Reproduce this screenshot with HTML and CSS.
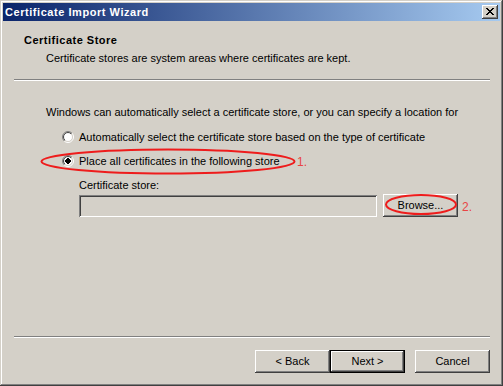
FILE: index.html
```html
<!DOCTYPE html>
<html>
<head>
<meta charset="utf-8">
<title>Certificate Import Wizard</title>
<link rel="stylesheet" href="styles.css">
</head>
<body>
<div class="window">
  <div class="titlebar">
    <span class="title">Certificate Import Wizard</span>
    <button class="close" aria-label="Close">
      <svg width="8" height="7" viewBox="0 0 8 7" shape-rendering="crispEdges">
        <path d="M0 0h2v1h-2zM6 0h2v1h-2zM1 1h2v1h-2zM5 1h2v1h-2zM2 2h4v1h-4zM3 3h2v1h-2zM2 4h4v1h-4zM1 5h2v1h-2zM5 5h2v1h-2zM0 6h2v1h-2zM6 6h2v1h-2z" fill="#000"/>
      </svg>
    </button>
  </div>
  <div class="header">
    <div class="h-title">Certificate Store</div>
    <div class="h-sub">Certificate stores are system areas where certificates are kept.</div>
  </div>
  <div class="sep"></div>
  <div class="content">
    <p class="intro">Windows can automatically select a certificate store, or you can specify a location for</p>
    <div class="radio-row">
      <svg class="radio" width="12" height="12" viewBox="0 0 12 12">
        <defs>
          <linearGradient id="ro" x1="0" y1="0" x2="1" y2="1">
            <stop offset="0.5" stop-color="#808080"/><stop offset="0.5" stop-color="#ffffff"/>
          </linearGradient>
          <linearGradient id="ri" x1="0" y1="0" x2="1" y2="1">
            <stop offset="0.5" stop-color="#404040"/><stop offset="0.5" stop-color="#d4d0c8"/>
          </linearGradient>
        </defs>
        <circle cx="6" cy="6" r="5.5" fill="none" stroke="url(#ro)"/>
        <circle cx="6" cy="6" r="4.5" fill="#fff" stroke="url(#ri)"/>
      </svg>
      <span>Automatically select the certificate store based on the type of certificate</span>
    </div>
    <div class="radio-row second">
      <svg class="radio" width="12" height="12" viewBox="0 0 12 12">
        <circle cx="6" cy="6" r="5.5" fill="none" stroke="url(#ro)"/>
        <circle cx="6" cy="6" r="4.5" fill="#fff" stroke="url(#ri)"/>
        <rect x="4" y="4" width="4" height="4" fill="#000"/>
        <rect x="5" y="3" width="2" height="6" fill="#000"/>
        <rect x="3" y="5" width="6" height="2" fill="#000"/>
      </svg>
      <span>Place all certificates in the following store</span>
    </div>
    <div class="store-label">Certificate store:</div>
    <div class="store-row">
      <div class="field"></div>
      <button class="btn">Browse...</button>
    </div>
  </div>
  <div class="sep"></div>
  <div class="footer">
    <button class="btn">&lt; Back</button>
    <button class="btn default">Next &gt;</button>
    <button class="btn cancel">Cancel</button>
  </div>
  <svg class="annot" width="503" height="386" viewBox="0 0 503 386">
    <ellipse cx="168" cy="161.5" rx="126.5" ry="12" fill="none" stroke="#ee1c1c" stroke-width="2"/>
    <ellipse cx="421" cy="204.5" rx="35" ry="9.5" fill="none" stroke="#ee1c1c" stroke-width="2"/>
    <text x="297" y="166" class="annot-text">1.</text>
    <text x="462" y="211" class="annot-text">2.</text>
  </svg>
</div>
</body>
</html>
```

FILE: styles.css
```css
html, body {
  margin: 0;
  padding: 0;
  background: #d4d0c8;
}

body {
  font-family: "Liberation Sans", Arial, sans-serif;
  font-size: 11px;
  line-height: 13px;
  color: #000;
}

.window {
  position: relative;
  width: 503px;
  height: 386px;
  box-sizing: border-box;
  padding: 3px;
  background: #d4d0c8;
  box-shadow: inset -1px -1px #404040, inset 1px 1px #d4d0c8,
              inset -2px -2px #808080, inset 2px 2px #ffffff;
  display: flex;
  flex-direction: column;
}

.titlebar {
  height: 18px;
  flex: none;
  display: flex;
  align-items: center;
  justify-content: space-between;
  padding: 0 2px 0 2px;
  background: linear-gradient(to right, #0a246a, #a6caf0);
}

.title {
  color: #fff;
  font-weight: bold;
  font-size: 11px;
  line-height: 13px;
  letter-spacing: 0.55px;
}

.close {
  width: 16px;
  height: 14px;
  padding: 0;
  border: 0;
  margin: 0;
  background: #d4d0c8;
  box-shadow: inset -1px -1px #404040, inset 1px 1px #ffffff,
              inset -2px -2px #808080, inset 2px 2px #d4d0c8;
  display: flex;
  align-items: center;
  justify-content: center;
}

.close svg {
  display: block;
  margin: 0 1px 1px 0;
}

.header {
  flex: none;
  padding: 13px 0 0 21px;
}

.h-title {
  font-weight: bold;
  letter-spacing: 0.5px;
}

.h-sub {
  margin-top: 5px;
  padding-left: 22px;
}

.sep {
  flex: none;
  height: 0;
  margin: 14px 10px 0 11px;
  border-top: 1px solid #808080;
  border-bottom: 1px solid #ffffff;
}

.content {
  flex: 1;
  padding: 25px 0 0 43px;
}

.intro {
  margin: 0;
}

.radio-row {
  display: flex;
  align-items: flex-start;
  gap: 5px;
  margin: 12px 0 0 16px;
}

.radio-row.second {
  margin-top: 11px;
}

.radio {
  display: block;
  flex: none;
}

.store-label {
  margin: 11px 0 0 33px;
}

.store-row {
  display: flex;
  align-items: flex-start;
  gap: 6px;
  margin: 2px 0 0 33px;
}

.field {
  width: 298px;
  height: 22px;
  margin-top: 1px;
  background: #d4d0c8;
  box-shadow: inset 1px 1px #808080, inset -1px -1px #ffffff,
              inset 2px 2px #404040, inset -2px -2px #d4d0c8;
}

.btn {
  width: 75px;
  height: 23px;
  padding: 0;
  margin: 0;
  border: 0;
  background: #d4d0c8;
  font-family: "Liberation Sans", Arial, sans-serif;
  font-size: 11px;
  line-height: 13px;
  color: #000;
  box-shadow: inset -1px -1px #404040, inset 1px 1px #ffffff,
              inset -2px -2px #808080, inset 2px 2px #d4d0c8;
}

.btn.default {
  box-shadow: inset 0 0 0 1px #000000, inset -2px -2px #404040,
              inset 2px 2px #ffffff, inset -3px -3px #808080,
              inset 3px 3px #d4d0c8;
}

.footer {
  flex: none;
  display: flex;
  justify-content: flex-end;
  padding: 12px 10px 10px 0;
}

.btn.cancel {
  margin-left: 10px;
}

.annot {
  position: absolute;
  top: 0;
  left: 0;
  pointer-events: none;
}

.annot-text {
  font-family: "Liberation Sans", Arial, sans-serif;
  font-size: 12px;
  fill: #e84444;
}
```
